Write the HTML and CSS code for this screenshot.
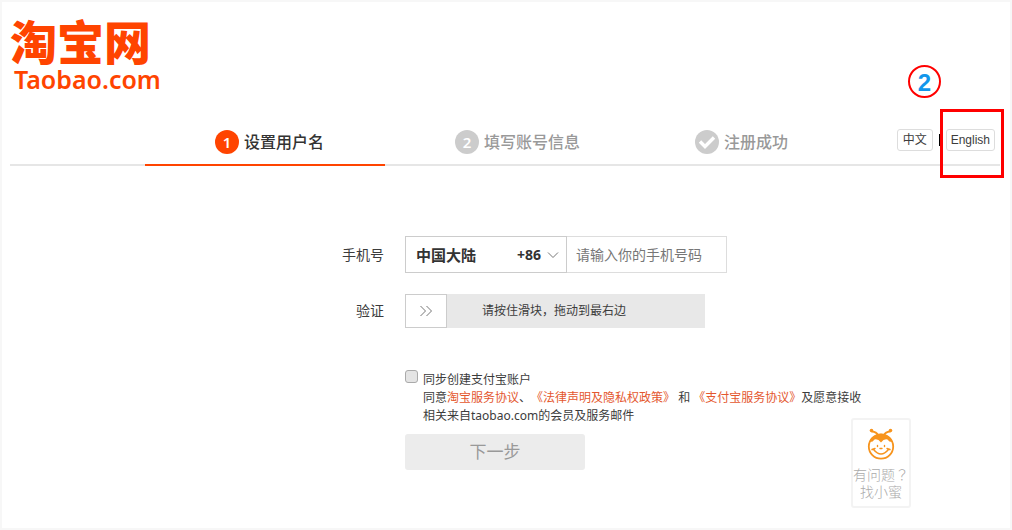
FILE: index.html
```html
<!DOCTYPE html>
<html lang="zh-CN">
<head>
<meta charset="utf-8">
<title>淘宝网</title>
<link rel="stylesheet" href="styles.css">
</head>
<body>
<div class="page">
  <header class="header">
    <a class="logo" href="#"><span class="logo-cn">淘宝网</span><span class="logo-en">Taobao.com</span></a>
  </header>

  <div class="progress">
    <ol class="steps">
      <li class="step step-active"><span class="step-mark">1</span>设置用户名</li>
      <li class="step"><span class="step-mark">2</span>填写账号信息</li>
      <li class="step"><span class="step-mark">
        <svg width="24" height="24" viewBox="0 0 24 24" aria-hidden="true"><path d="M5 11.500l5 5 9-9" fill="none" stroke="#fff" stroke-width="3.400"/></svg>
      </span>注册成功</li>
    </ol>
    <div class="languages">
      <button class="language" type="button">中文</button>
      <span class="divider"></span>
      <div class="marked">
        <button class="language" type="button">English</button>
        <span class="frame"></span>
        <span class="callout">2</span>
      </div>
    </div>
  </div>

  <form class="form">
    <label class="label" for="phone">手机号</label>
    <div class="phone">
      <div class="country">
        <select class="country-select" aria-label="国家"><option>中国大陆</option></select>
        <span class="country-code">+86
          <svg width="12" height="8" viewBox="0 0 12 8" aria-hidden="true"><path d="M1 1.5l5 5 5-5" fill="none" stroke="#777"/></svg>
        </span>
      </div>
      <input class="phone-input" id="phone" type="tel" placeholder="请输入你的手机号码">
    </div>

    <span class="label">验证</span>
    <div class="slider">
      <button class="slider-handle" type="button" aria-label="拖动">
        <svg width="14" height="12" viewBox="0 0 14 12" aria-hidden="true"><path d="M1.5 1l5 5-5 5M7.5 1l5 5-5 5" fill="none" stroke="#777"/></svg>
      </button>
      <span class="slider-text">请按住滑块，拖动到最右边</span>
    </div>

    <div class="terms">
      <input class="agree" id="agree" type="checkbox">
      <div class="terms-text">
        <label for="agree">同步创建支付宝账户</label>
        <p>同意<a href="#">淘宝服务协议</a>、<a href="#">《法律声明及隐私权政策》</a> 和 <a href="#">《支付宝服务协议》</a>及愿意接收</p>
        <p>相关来自taobao.com的会员及服务邮件</p>
      </div>
    </div>
    <button class="next" type="button">下一步</button>
  </form>

  <a class="helper" href="#">
    <svg width="30" height="34" viewBox="0 0 30 34" aria-hidden="true">
      <g fill="none" stroke="#f7941d" stroke-linecap="round">
        <path d="M12 8Q10.500 5 6 4.500M18 8Q19.500 5 24 4.500" stroke-width="1.800"/>
        <circle cx="15" cy="19.500" r="12.200" stroke-width="1.800"/>
        <path d="M11.500 18.500v1M18.500 18.500v1M14 21.500h2M7.500 22.500Q15 31.500 22.500 22.500M6 22.500l3-1M24 22.500l-3-1" stroke-width="1.400"/>
      </g>
      <circle cx="5.500" cy="3.500" r="1.800" fill="#f7941d"/><circle cx="24.500" cy="3.500" r="1.800" fill="#f7941d"/>
      <path d="M4 15C7 4 23 4 26 15Q23 15 21.500 12.500Q18 11.500 15 15.500Q12 11.500 8.500 12.500Q7 15 4 15z" fill="#f7941d"/>
    </svg>
    <span lang="zh-TW">有问题？</span><span>找小蜜</span>
  </a>
</div>
</body>
</html>
```
FILE: styles.css
```css
* {
  box-sizing: border-box;
}

body {
  margin: 0;
  color: #3c3c3c;
  background: #fff;
  font: 12px/18px "Noto Sans", "Noto Sans CJK SC", sans-serif;
  text-spacing-trim: space-all;
}

button, input, select {
  margin: 0;
  font: inherit;
  color: inherit;
}

p {
  margin: 0;
}

a {
  color: #e4572e;
  text-decoration: none;
}

.page {
  position: relative;
  min-height: 100vh;
  padding: 18px 10px 20px 8px;
  border: 2px solid #f7f7f7;
}

.header {
  display: flex;
  height: 100px;
}

.logo {
  display: flex;
  flex-direction: column;
  gap: 3px;
  color: #ff4400;
}

.logo-cn {
  font: 900 47px/44px "Noto Sans", "Noto Sans CJK SC", sans-serif;
}

.logo-en {
  padding-left: 4px;
  font: 600 25px/24px "Noto Sans", sans-serif;
}

.progress {
  display: grid;
  grid-template-columns: 1fr 720px 1fr;
  height: 46px;
  border-bottom: 2px solid #e6e6e6;
}

.steps {
  grid-column: 2;
  display: flex;
  height: 46px;
  margin: 0;
  padding: 0;
  list-style: none;
}

.step {
  display: flex;
  flex: 1;
  align-items: center;
  gap: 5px;
  padding-left: 70px;
  border-bottom: 2px solid transparent;
  color: #999;
  font-size: 16px;
  font-weight: 500;
  line-height: 20px;
  font-family: "Noto Sans", "Noto Sans CJK SC", sans-serif;
}

.step-active {
  border-color: #ff4400;
  color: #333;
}

.step-mark {
  display: flex;
  align-items: center;
  justify-content: center;
  width: 24px;
  height: 24px;
  border-radius: 50%;
  background: #ccc;
  color: #fff;
  font: 600 15px/24px "Noto Sans", sans-serif;
}

.step-active .step-mark {
  background: #ff4400;
}

.languages {
  display: flex;
  align-items: center;
  justify-content: flex-end;
  height: 39px;
  padding-right: 5px;
}

.language {
  display: block;
  height: 22px;
  padding: 0 5px;
  border: 1px solid #ddd;
  border-radius: 3px;
  background: #fff;
  line-height: 20px;
}

.divider {
  width: 2px;
  height: 12px;
  margin: 0 5px 0 6px;
  background: #000;
}

.marked {
  position: relative;
}

.marked .language {
  padding: 0 4px;
  font-family: "Liberation Sans", sans-serif;
}

.frame {
  position: absolute;
  top: -20px;
  right: -9px;
  width: 64px;
  height: 69px;
  border: 3px solid #ff0000;
  pointer-events: none;
}

.callout {
  position: absolute;
  top: -64px;
  right: 54px;
  width: 33px;
  height: 33px;
  border: 2px solid #ff0000;
  border-radius: 50%;
  color: #1296eb;
  font: 700 24px/31px "Liberation Sans", sans-serif;
  text-align: center;
}

.form {
  display: grid;
  grid-template-columns: 374px auto;
  justify-content: start;
  justify-items: start;
  align-items: center;
  column-gap: 21px;
  padding-top: 70px;
}

.label {
  justify-self: end;
  margin-bottom: 21px;
  font-size: 14px;
}

.phone {
  display: flex;
  height: 37px;
}

.country {
  position: relative;
  width: 162px;
}

.country-select {
  width: 100%;
  height: 100%;
  padding: 0 10px;
  border: 1px solid #ccc;
  border-radius: 0;
  background: #fff;
  appearance: none;
  color: #333;
  font-size: 15px;
  font-weight: 700;
}

.country-code {
  position: absolute;
  top: 9px;
  right: 8px;
  display: flex;
  align-items: center;
  gap: 6px;
  color: #333;
  font: 700 14px/20px "Noto Sans", sans-serif;
  pointer-events: none;
}

.phone-input {
  width: 160px;
  padding: 0 9px;
  border: 1px solid #ddd;
  border-left: 0;
  outline: 0;
  font-size: 14px;
}

.phone-input::placeholder {
  color: #777;
}

.slider {
  display: flex;
  align-items: center;
  width: 300px;
  height: 34px;
  background: #e8e8e8;
}

.phone,
.slider {
  margin-bottom: 21px;
}

.slider-handle {
  display: flex;
  align-items: center;
  justify-content: center;
  width: 42px;
  height: 34px;
  padding: 0;
  border: 1px solid #ccc;
  background: #fff;
}

.slider-text {
  padding-left: 35px;
}

.terms {
  grid-column: 2;
  display: flex;
  align-items: flex-start;
  gap: 5px;
  padding-top: 21px;
}

.agree {
  appearance: none;
  width: 13px;
  height: 13px;
  border: 1px solid #aaa;
  border-radius: 3px;
  background: #e4e4e4;
}

.terms-text {
  padding-top: 1px;
}

.terms-text > * {
  display: block;
}

.next {
  grid-column: 2;
  width: 180px;
  height: 36px;
  margin-top: 9px;
  border: 0;
  border-radius: 3px;
  background: #ececec;
  color: #999;
  font-size: 17px;
}

.helper {
  position: absolute;
  right: 99px;
  bottom: 20px;
  display: flex;
  flex-direction: column;
  align-items: center;
  width: 60px;
  height: 90px;
  padding-top: 7px;
  border: 2px solid #f3f3f3;
  border-radius: 3px;
  background: #fff;
  color: #aaa;
  font-family: "Noto Sans", "Noto Sans CJK TC", sans-serif;
  font-size: 14px;
  font-weight: 300;
  line-height: 17px;
}

.helper svg {
  margin-bottom: 5px;
}

.helper span {
  white-space: nowrap;
}
```
